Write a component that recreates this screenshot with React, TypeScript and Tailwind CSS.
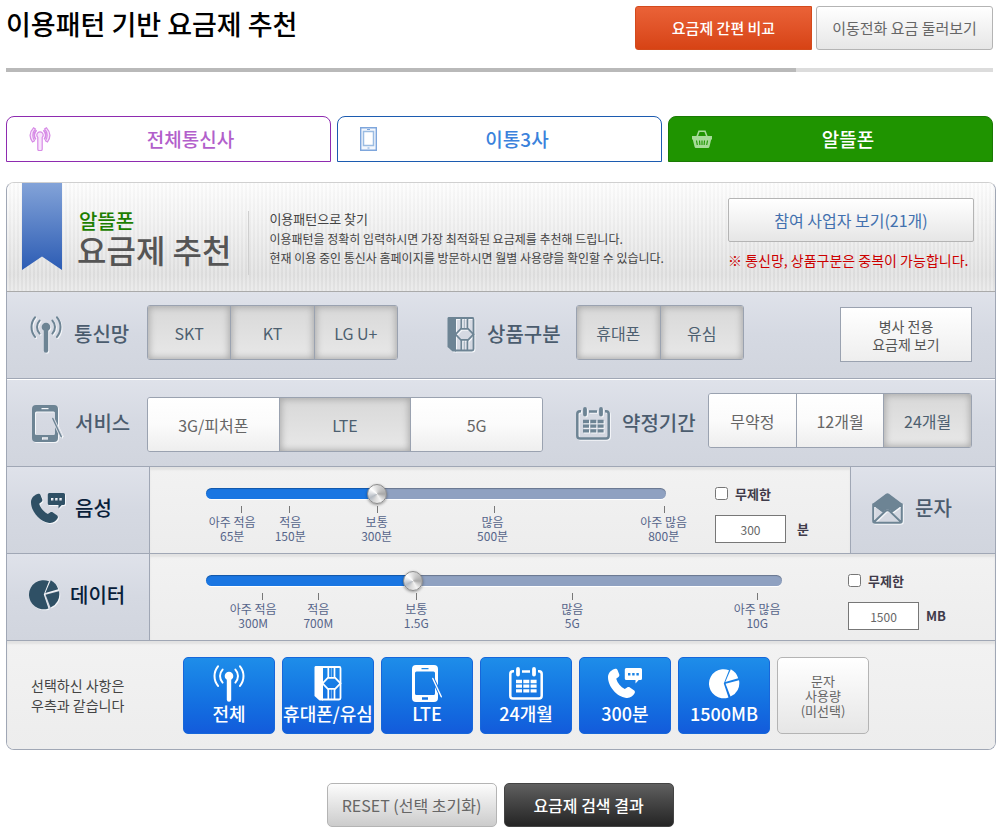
import React, { useState } from "react";

type IconProps = { className?: string };

function AntennaIcon({ className }: IconProps) {
  return (
    <svg viewBox="0 0 32 37" width="32" height="37" fill="none" stroke="currentColor" strokeLinecap="round" className={className} aria-hidden="true">
      <circle cx="16" cy="11" r="4.3" fill="currentColor" stroke="none" />
      <path d="M16 12v22.5" strokeWidth="4.4" />
      <path d="M9.6 4.6a9.5 9.5 0 0 0 0 13M22.4 4.6a9.5 9.5 0 0 1 0 13" strokeWidth="2" />
      <path d="M5 1.3a15.5 15.5 0 0 0 0 19.6M27 1.3a15.5 15.5 0 0 1 0 19.6" strokeWidth="2" />
    </svg>
  );
}

function SimIcon({ className }: IconProps) {
  return (
    <svg viewBox="0 0 28 35" width="28" height="35" fill="none" stroke="currentColor" className={className} aria-hidden="true">
      <path d="M1.5 0H9v34.500H5.500L.5 30V1.500Q.5 0 1.500 0z" fill="currentColor" stroke="none" />
      <path d="M8 1h17.500Q26.500 1 26.500 2.500v29.500Q26.500 33.500 25 33.500H8" strokeWidth="1.800" />
      <path d="M8.500 17.300l5.300-5.500h7.400l5.300 5.500-5.300 5.500h-7.400z" strokeWidth="1.800" />
      <path d="M14.300 1v11M20.500 1v11M14.300 23v10.500M20.500 23v10.500" strokeWidth="1.700" />
      <path d="M17.400 1v11M17.400 23v10.500" strokeWidth="1" opacity=".45" />
    </svg>
  );
}

function PhonePenIcon({ className, gap = "#d8dce4" }: IconProps & { gap?: string }) {
  return (
    <svg viewBox="0 0 31 37" width="31" height="37" className={className} aria-hidden="true">
      <path
        fill="currentColor"
        fillRule="evenodd"
        d="M4 0h18a4 4 0 0 1 4 4v29a4 4 0 0 1-4 4H4a4 4 0 0 1-4-4V4a4 4 0 0 1 4-4zM4.500 6.500Q3 6.500 3 8v20.500Q3 30 4.500 30h17q1.500 0 1.500-1.500V8q0-1.500-1.500-1.500zM9.500 3v1.300h7V3zM10 32.200v2.600h6v-2.600z"
      />
      <path d="M21 14l8.300 17.500" stroke={gap} strokeWidth="3.400" />
      <path d="M20.800 13.500l8.500 18.300" stroke="currentColor" strokeWidth="1.400" strokeLinecap="round" />
    </svg>
  );
}

function CalendarIcon({ className }: IconProps) {
  return (
    <svg viewBox="0 0 34 33" width="34" height="33" fill="none" stroke="currentColor" className={className} aria-hidden="true">
      <path d="M5 4.300H4a2.800 2.800 0 0 0-2.700 2.800v21.600a2.800 2.800 0 0 0 2.700 2.800h26a2.800 2.800 0 0 0 2.700-2.800V7.100A2.800 2.800 0 0 0 30 4.300h-1M13 4.500h8" strokeWidth="2.500" />
      <path d="M9 2v5.500M25 2v5.500" strokeWidth="3.800" strokeLinecap="round" />
      <path d="M7 14.500h6M14.300 14.500h6M21.600 14.500h6M7 19.200h6M14.300 19.200h6M21.600 19.200h6M7 23.900h6M14.300 23.900h6M21.600 23.900h6" strokeWidth="3.300" />
    </svg>
  );
}

function CallIcon({ className }: IconProps) {
  return (
    <svg viewBox="0 0 34 31" width="34" height="31" className={className} aria-hidden="true">
      <path
        fill="currentColor"
        d="M6.500 1C7.800.4 9 .9 9.500 2l1.700 4.300c.4 1.100.1 2-.8 2.700L8.200 10.700c1.300 4.300 4.500 8.200 8.600 10.300l2.300-1.500c.9-.6 1.900-.6 2.800 0l4 2.800c1 .7 1.300 1.900.7 3-1.500 2.900-4.400 5-8.400 4.600C8.500 28.800.2 18.300 0 9.500 0 5.700 2.300 2.400 6.500 1z"
      />
      <path
        fill="currentColor"
        fillRule="evenodd"
        d="M18.300 0h14.200Q34 0 34 1.500v9q0 1.500-1.500 1.500h-1.800L27.500 15.500V12h-9.200q-1.500 0-1.500-1.500v-9Q16.800 0 18.300 0zM20 5v2.400h2.400V5zM24.200 5v2.400h2.400V5zM28.400 5v2.400h2.400V5z"
      />
    </svg>
  );
}

function PieIcon({ className }: IconProps) {
  return (
    <svg viewBox="0 0 31 30" width="31" height="30" fill="currentColor" className={className} aria-hidden="true">
      <path d="M14.800 14.600L20 1.200A14.600 14.600 0 1 0 19.500 28.500z" />
      <path d="M16.300 13L21.800.2a14.500 14.500 0 0 1 7.400 9z" />
      <path d="M16.600 14.800L30 11.200a14.600 14.600 0 0 1-8.500 16.400z" />
    </svg>
  );
}

function MailIcon({ className }: IconProps) {
  return (
    <svg viewBox="0 0 31 31" width="31" height="31" fill="none" stroke="currentColor" className={className} aria-hidden="true">
      <path d="M1 10.500L14 .8q1.500-1 3 0L30 10.500v1L20 19l-2.500-1.800q-2-1.200-4 0L11 19 1 11.500z" fill="currentColor" stroke="none" />
      <path d="M1.200 10.500V28q0 1.800 1.800 1.800h25q1.800 0 1.800-1.800V10.500M1.500 11.500L11.500 19M29.500 11.500L19.500 19M2 29L13.500 18q2-1.400 4 0L29 29" strokeWidth="2" />
    </svg>
  );
}

function TabAntennaIcon() {
  return (
    <svg viewBox="0 0 22 24" width="22" height="24" fill="none" stroke="#d78be6" strokeWidth="1.200" aria-hidden="true">
      <path d="M8.800 10.400a3.200 3.200 0 1 1 4.400 0v11.800q0 1.300-1.300 1.300h-1.800q-1.300 0-1.300-1.300z" fill="#f8e6fb" />
      <path d="M4.500.8Q-1.800 7.500 3.500 15l2-1.200Q1.800 7.500 6.300 2zM17.500.8Q23.800 7.500 18.500 15l-2-1.200Q20.200 7.500 15.700 2z" fill="#f8e6fb" />
      <path d="M7.500 3.200Q3.500 7.500 6.700 12.500M14.500 3.200Q18.500 7.500 15.300 12.500" strokeWidth="1.800" />
    </svg>
  );
}

function TabPhoneIcon() {
  return (
    <svg viewBox="0 0 17 24" width="17" height="24" fill="none" stroke="#7ea6dc" aria-hidden="true">
      <path d="M.7.7h15.600v22.600H.7z" strokeWidth="1.400" fill="#f3f7fd" />
      <path d="M3.500 4.500h10v14h-10z" strokeWidth="1.500" stroke="#9bbce2" fill="#fff" />
      <path d="M7 2.500h3M7.500 21h2" strokeWidth="1" />
    </svg>
  );
}

function BasketIcon() {
  return (
    <svg viewBox="0 0 20 18" width="20" height="18" fill="none" aria-hidden="true">
      <path d="M4.500 8L7 1.300h6L15.500 8" stroke="#a6db98" strokeWidth="1.600" />
      <path d="M0 6h20v3.500h-.8L17.500 16.500q-.3 1.500-1.500 1.500H4q-1.200 0-1.500-1.500L.8 9.500H0z" fill="#a6db98" />
      <path d="M4.500 10.500l.8 4.500M7.500 10.500l.4 4.500M10 10.500V15M12.500 10.500l-.4 4.500M15.500 10.500l-.8 4.500" stroke="#1f9400" strokeWidth="1.100" />
    </svg>
  );
}

const darkRow = "bg-linear-to-b from-[#dfe2ea] via-[#d5d9e2] to-[#d1d5de]";
const lightRow = "bg-linear-to-b from-[#f2f2f2] to-[#ededed] shadow-[inset_0_3px_2px_#e2e2e2]";
const lineColor = "border-[#a0a7b5]";

function RowLabel({ icon, text, dark }: { icon: React.ReactNode; text: string; dark?: boolean }) {
  return (
    <div className={`flex items-center ${dark ? "gap-2.5 text-[#2f5065]" : "gap-3 text-[#6d8494]"}`}>
      <span className="shrink-0 drop-shadow-[1px_1px_0_#f4f6f9]">{icon}</span>
      <span className={`whitespace-nowrap text-xl font-medium ${dark ? "text-[#08203a]" : "text-[#4b5c6e]"}`}>{text}</span>
    </div>
  );
}

function Segments({
  items,
  initial,
  multiple,
  width,
}: {
  items: string[];
  initial: string[];
  multiple?: boolean;
  width: string;
}) {
  const [on, setOn] = useState(initial);
  const toggle = (item: string) => {
    if (!multiple) setOn([item]);
    else setOn(on.includes(item) ? on.filter((x) => x !== item) : [...on, item]);
  };
  return (
    <div className={`flex h-[55px] overflow-hidden rounded-[3px] border border-[#9aa2b0] ${width}`}>
      {items.map((item) => (
        <button
          key={item}
          type="button"
          aria-pressed={on.includes(item)}
          onClick={() => toggle(item)}
          className={`flex-1 border-l border-[#9aa2b0] text-base first:border-l-0 ${
            on.includes(item)
              ? "bg-linear-to-b from-[#d8d8d8] to-[#e8e8e8] text-[#4d5f70] shadow-[inset_0_0_7px_1px_#a6a6a6]"
              : "bg-linear-to-b from-white via-[#fbfbfb] to-[#eeeeee] text-[#666666]"
          }`}
        >
          {item}
        </button>
      ))}
    </div>
  );
}

type Stop = { tick: number; at: number; name: string; amount: string; value: number };

const voiceStops: Stop[] = [
  { tick: 7.7, at: 5.7, name: "아주 적음", amount: "65분", value: 65 },
  { tick: 18.1, at: 18.3, name: "적음", amount: "150분", value: 150 },
  { tick: 37.1, at: 37.1, name: "보통", amount: "300분", value: 300 },
  { tick: 62.5, at: 62.3, name: "많음", amount: "500분", value: 500 },
  { tick: 99.5, at: 99.5, name: "아주 많음", amount: "800분", value: 800 },
];

const dataStops: Stop[] = [
  { tick: 9.8, at: 8.2, name: "아주 적음", amount: "300M", value: 300 },
  { tick: 19.5, at: 19.5, name: "적음", amount: "700M", value: 700 },
  { tick: 36.5, at: 36.5, name: "보통", amount: "1.5G", value: 1500 },
  { tick: 63.6, at: 63.6, name: "많음", amount: "5G", value: 5000 },
  { tick: 95.7, at: 95.7, name: "아주 많음", amount: "10G", value: 10000 },
];

function valueAt(stops: Stop[], position: number) {
  let from = { tick: 0, value: 0 };
  for (const stop of stops) {
    if (position <= stop.tick) {
      const share = (position - from.tick) / (stop.tick - from.tick);
      return Math.round(from.value + share * (stop.value - from.value));
    }
    from = stop;
  }
  return stops[stops.length - 1].value;
}

function UsageRow({
  id,
  label,
  unit,
  stops,
  start,
  startValue,
  controls,
}: {
  id: string;
  label: string;
  unit: string;
  stops: Stop[];
  start: number;
  startValue: number;
  controls: string;
}) {
  const [position, setPosition] = useState(start);
  const [value, setValue] = useState(String(startValue));
  return (
    <div className={`flex flex-1 pl-14 pt-4 ${lightRow}`}>
      <div className="flex-1">
        <input
          type="range"
          aria-label={label}
          min={0}
          max={100}
          step={0.1}
          value={position}
          onChange={(e) => {
            const next = Number(e.target.value);
            setPosition(next);
            setValue(String(valueAt(stops, next)));
          }}
          style={{ backgroundImage: `linear-gradient(to right, #1a76e2 ${position}%, #8fa1c1 ${position}%)` }}
          className="mt-[5px] block h-[11px] w-full cursor-pointer appearance-none rounded-full shadow-[inset_0_1px_1px_#00000044,0_1px_0_#ffffff] [&::-webkit-slider-thumb]:size-5 [&::-webkit-slider-thumb]:appearance-none [&::-webkit-slider-thumb]:rounded-full [&::-webkit-slider-thumb]:border [&::-webkit-slider-thumb]:border-[#8c8c8c] [&::-webkit-slider-thumb]:bg-[conic-gradient(#dcdcdc,#c0c0c0_50deg,#a8a8a8_90deg,#f4f4f4_150deg,#d8d8d8_200deg,#b4bac2_240deg,#ffffff_310deg,#dcdcdc)] [&::-webkit-slider-thumb]:shadow-[0_1px_3px_#00000066]"
        />
        <div className="relative mt-[7px] h-10">
          {stops.map((stop) => (
            <React.Fragment key={stop.name}>
              <span className="absolute top-0 h-[7px] w-px bg-[#777777]" style={{ left: `${stop.tick}%` }} />
              <span
                className="absolute top-[9px] -translate-x-1/2 whitespace-nowrap text-center text-xs leading-[14px] text-[#56658a]"
                style={{ left: `${stop.at}%` }}
              >
                {stop.name}
                <br />
                {stop.amount}
              </span>
            </React.Fragment>
          ))}
        </div>
      </div>
      <div className={`shrink-0 ${controls}`}>
        <label className="flex h-[21px] items-center gap-[7px] text-[13px] font-bold text-[#3f3b4a]">
          <input type="checkbox" className="m-0 size-[13px]" />
          무제한
        </label>
        <div className="mt-[11px] flex items-center gap-[7px]">
          <input
            type="text"
            id={id}
            aria-label={`${label} 사용량`}
            value={value}
            onChange={(e) => setValue(e.target.value)}
            className="h-7 w-[71px] border border-[#777777] bg-white text-center text-xs text-[#666666]"
          />
          <label htmlFor={id} className={`text-[13px] font-bold text-[#3f3b4a] ${unit === "분" ? "pl-1" : ""}`}>
            {unit}
          </label>
        </div>
      </div>
    </div>
  );
}

const tiles = [
  { text: "전체", icon: <AntennaIcon /> },
  { text: "휴대폰/유심", icon: <SimIcon /> },
  { text: "LTE", icon: <PhonePenIcon gap="#1a78e4" /> },
  { text: "24개월", icon: <CalendarIcon /> },
  { text: "300분", icon: <CallIcon /> },
  { text: "1500MB", icon: <PieIcon /> },
];

const greyButton = "border border-[#b4b4b4] bg-linear-to-b from-white to-[#e6e6e6]";

export default function App() {
  return (
    <main className="bg-white pt-1.5 pr-1.5 pb-0.5 pl-1.5 font-['Noto_Sans_CJK_KR','Noto_Sans',sans-serif] text-[#555555]">
      <header className="mr-[3px] flex items-start justify-between">
        <h1 className="whitespace-nowrap text-[27px] leading-9 font-medium text-black">이용패턴 기반 요금제 추천</h1>
        <div className="flex gap-1">
          <button
            type="button"
            className="h-11 w-[177px] rounded-l-[3px] border border-[#d34a1c] bg-linear-to-b from-[#ea6237] to-[#d74314] text-[15px] font-medium text-white"
          >
            요금제 간편 비교
          </button>
          <button type="button" className={`h-11 w-[177px] rounded-[3px] text-[15px] text-[#666666] ${greyButton}`}>
            이동전화 요금 둘러보기
          </button>
        </div>
      </header>

      <div className="mt-[18px] mr-[3px] h-1 bg-[#dcdcdc]">
        <div className="h-full w-4/5 bg-[#b9b9b9]" />
      </div>

      <nav className="mt-11 mr-[3px] grid grid-cols-3 gap-1.5 text-[19px] font-medium">
        <button type="button" className="flex h-[46px] items-center rounded-t-lg border border-[#8e2bb0] bg-white pl-[22px] text-[#b25fcb]">
          <TabAntennaIcon />
          <span className="flex-1">전체통신사</span>
        </button>
        <button type="button" className="flex h-[46px] items-center rounded-t-lg border border-[#1c5bb0] bg-white pr-1 pl-[22px] text-[#3b82dc]">
          <TabPhoneIcon />
          <span className="flex-1">이통3사</span>
        </button>
        <button type="button" className="flex h-[46px] items-center rounded-t-lg border border-[#1a7a04] bg-[#1f9400] pr-2 pl-[23px] text-white">
          <BasketIcon />
          <span className="flex-1">알뜰폰</span>
        </button>
      </nav>

      <section className={`mt-5 overflow-hidden rounded-lg border ${lineColor} border-t-[#d0d0d0]`}>
        <div
          className={`flex h-[109px] items-start border-b border-[#aaaaaa] bg-[repeating-linear-gradient(90deg,#ffffff40_0px,#ffffff40_2px,#d0d0d01a_2px,#d0d0d01a_4px),linear-gradient(#fdfdfd,#dddddd_85%,#e6e6e6)]`}
        >
          <svg viewBox="0 0 40 87" className="ml-[15px] h-[87px] w-10 shrink-0" aria-hidden="true">
            <defs>
              <linearGradient id="ribbon" x1="0" y1="0" x2="0" y2="1">
                <stop offset="0" stopColor="#83a3d8" />
                <stop offset="1" stopColor="#2c5cb4" />
              </linearGradient>
            </defs>
            <path d="M0 0h40v87L20 73.500 0 87z" fill="url(#ribbon)" />
          </svg>
          <h2 className="ml-[15px] whitespace-nowrap pt-[26px] font-medium">
            <span className="block pl-0.5 text-xl leading-6 text-[#1c7e00]">알뜰폰</span>
            <span className="block text-[32px] leading-8 text-[#555555]">요금제 추천</span>
          </h2>
          <span className="mt-7 ml-[17px] h-16 w-px bg-[#cfcfcf]" />
          <div className="mt-[26px] ml-5 flex-1 whitespace-nowrap text-xs leading-[19px] text-[#444444]">
            <p className="text-[13px] leading-5">이용패턴으로 찾기</p>
            <p>이용패턴을 정확히 입력하시면 가장 최적화된 요금제를 추천해 드립니다.</p>
            <p>현재 이용 중인 통신사 홈페이지를 방문하시면 월별 사용량을 확인할 수 있습니다.</p>
          </div>
          <div className="mt-[15px] mr-[21px] w-[246px] shrink-0">
            <button type="button" className={`h-11 w-full rounded-[2px] text-base text-[#4270ae] ${greyButton}`}>
              참여 사업자 보기(21개)
            </button>
            <p className="mt-2 whitespace-nowrap text-[14px] leading-5 text-[#cc0000]">※ 통신망, 상품구분은 중복이 가능합니다.</p>
          </div>
        </div>

        <div className={`flex h-[87px] items-start border-b ${lineColor} ${darkRow} pt-[13px] pr-[23px] pl-[23px]`}>
          <div className="flex h-[58px] w-[117px] items-center">
            <RowLabel icon={<AntennaIcon />} text="통신망" />
          </div>
          <Segments items={["SKT", "KT", "LG U+"]} initial={["SKT", "KT", "LG U+"]} multiple width="w-[251px]" />
          <div className="ml-[49px] flex h-[58px] w-[129px] items-center">
            <RowLabel icon={<SimIcon />} text="상품구분" />
          </div>
          <Segments items={["휴대폰", "유심"]} initial={["휴대폰", "유심"]} multiple width="w-[168px]" />
          <button
            type="button"
            className="mt-[2px] ml-auto h-[55px] w-[132px] border border-[#9aa2b0] bg-linear-to-b from-white to-[#eeeeee] text-[14px] leading-[18px] text-[#555555]"
          >
            병사 전용
            <br />
            요금제 보기
          </button>
        </div>

        <div className={`flex h-[88px] items-start border-t border-b border-t-white border-b-[#a0a7b5] ${darkRow} pt-[13px] pr-[23px] pl-[25px]`}>
          <div className="flex h-[60px] w-[115px] items-center">
            <RowLabel icon={<PhonePenIcon />} text="서비스" />
          </div>
          <div className="pt-1">
            <Segments items={["3G/피처폰", "LTE", "5G"]} initial={["LTE"]} width="w-[396px]" />
          </div>
          <div className="ml-[33px] flex h-[60px] items-center">
            <RowLabel icon={<CalendarIcon />} text="약정기간" />
          </div>
          <div className="ml-auto">
            <Segments items={["무약정", "12개월", "24개월"]} initial={["24개월"]} width="w-[264px]" />
          </div>
        </div>

        <div className={`flex h-[87px] border-b ${lineColor}`}>
          <div className={`flex w-[143px] shrink-0 items-center border-r ${lineColor} ${darkRow} pb-1 pl-6`}>
            <RowLabel icon={<CallIcon />} text="음성" dark />
          </div>
          <UsageRow id="voice-amount" label="음성" unit="분" stops={voiceStops} start={36.6} startValue={300} controls="ml-[49px] w-[135px]" />
          <div className={`flex w-[145px] shrink-0 items-center border-l ${lineColor} ${darkRow} pb-1 pl-[21px]`}>
            <RowLabel icon={<MailIcon />} text="문자" />
          </div>
        </div>

        <div className={`flex h-[87px] border-b ${lineColor}`}>
          <div className={`flex w-[143px] shrink-0 items-center border-r ${lineColor} ${darkRow} pb-1 pl-[22px]`}>
            <RowLabel icon={<PieIcon />} text="데이터" dark />
          </div>
          <UsageRow id="data-amount" label="데이터" unit="MB" stops={dataStops} start={35.4} startValue={1500} controls="ml-[66px] w-[147px]" />
        </div>

        <div className={`flex h-[108px] items-start pt-4 pl-6 ${lightRow}`}>
          <p className="w-[152px] shrink-0 pt-[18px] text-[14px] leading-5 text-[#444444]">
            선택하신 사항은
            <br />
            우측과 같습니다
          </p>
          <div className="flex gap-[7px]">
            {tiles.map((tile) => (
              <div
                key={tile.text}
                className="flex h-[77px] w-[92px] flex-col items-center rounded-[5px] border border-[#1767da] bg-linear-to-b from-[#1e8de9] to-[#135bdb] pt-[7px] text-white"
              >
                <span className="flex h-[37px] items-center">{tile.icon}</span>
                <span className="whitespace-nowrap text-lg leading-[22px] font-medium">{tile.text}</span>
              </div>
            ))}
            <button
              type="button"
              className={`h-[77px] w-[92px] rounded-[5px] text-[13px] leading-[15px] text-[#666666] ${greyButton}`}
            >
              문자
              <br />
              사용량
              <br />
              (미선택)
            </button>
          </div>
        </div>
      </section>

      <div className="mt-[33px] mr-0.5 flex justify-center gap-[7px] text-base">
        <button
          type="reset"
          className="h-11 w-[170px] whitespace-nowrap rounded-[5px] border border-[#b4b4b4] bg-linear-to-b from-[#fcfcfc] to-[#cccccc] text-[#666666]"
        >
          RESET (선택 초기화)
        </button>
        <button
          type="submit"
          className="h-11 w-[170px] rounded-[5px] border border-[#444444] bg-linear-to-b from-[#606060] to-[#252525] font-medium text-white"
        >
          요금제 검색 결과
        </button>
      </div>
    </main>
  );
}
